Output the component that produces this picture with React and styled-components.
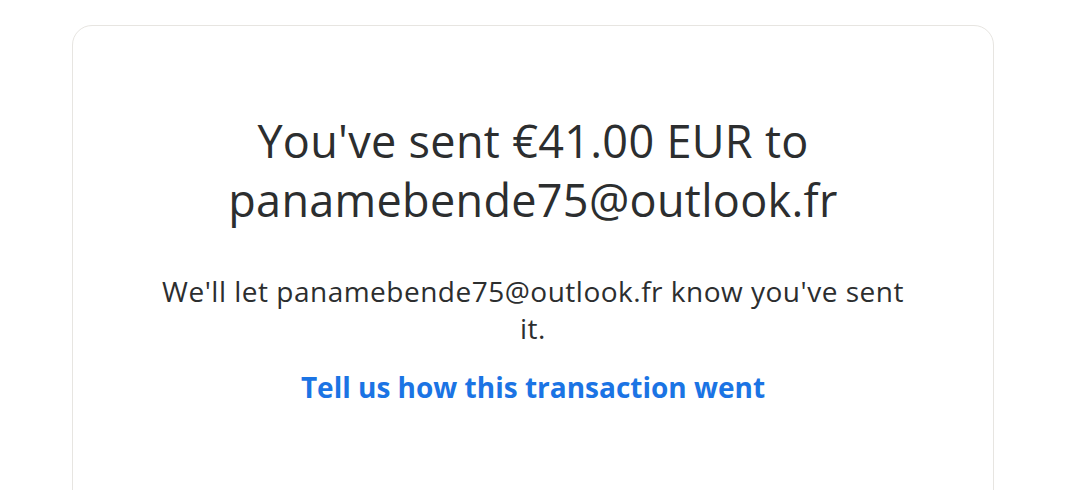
import React from "react";
import styled, { createGlobalStyle } from "styled-components";

const GlobalStyle = createGlobalStyle`
  html, body {
    margin: 0;
    padding: 0;
    background: #ffffff;
  }
  body {
    font-family: "Open Sans", "Liberation Sans", sans-serif;
    color: #2c2e2f;
  }
`;

const Page = styled.div`
  display: flex;
  justify-content: center;
  padding: 25px 86px 0 72px;
  height: 490px;
  overflow: hidden;
  box-sizing: border-box;
`;

const Card = styled.section`
  flex: 1;
  min-height: 560px;
  border: 1px solid #e7e5e1;
  border-radius: 20px;
  background: #ffffff;
  display: flex;
  flex-direction: column;
  align-items: center;
  padding: 85px 60px 40px;
  box-sizing: border-box;
`;

const Heading = styled.h1`
  margin: 0;
  font-size: 45px;
  line-height: 59px;
  letter-spacing: 0.3px;
  font-weight: 400;
  text-align: center;
  color: #2c2e2f;
  max-width: 720px;
`;

const Message = styled.p`
  margin: 44px 0 0;
  font-size: 28px;
  line-height: 37px;
  letter-spacing: 0.5px;
  text-align: center;
  color: #2c2e2f;
  max-width: 750px;
`;

const FeedbackLink = styled.a`
  margin-top: 22px;
  font-size: 28px;
  line-height: 36px;
  font-weight: 700;
  color: #1b74e4;
  text-decoration: none;
  cursor: pointer;
`;

export default function App() {
  const email = "panamebende75@outlook.fr";
  return (
    <>
      <GlobalStyle />
      <Page>
        <Card>
          <Heading>
            You've sent €41.00 EUR to
            <br />
            {email}
          </Heading>
          <Message>We'll let {email} know you've sent it.</Message>
          <FeedbackLink>Tell us how this transaction went</FeedbackLink>
        </Card>
      </Page>
    </>
  );
}
